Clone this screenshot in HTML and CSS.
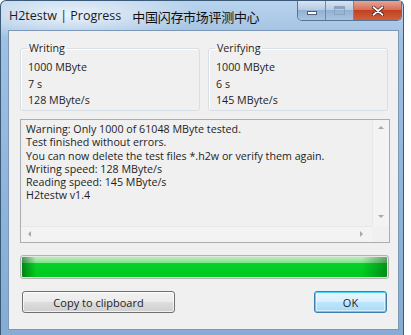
FILE: index.html
```html
<!DOCTYPE html>
<html lang="en">
<head>
  <meta charset="UTF-8" />
  <title>H2testw | Progress</title>
  <link rel="stylesheet" href="styles.css">
</head>
<body>
  <div class="window">
    <div class="titlebar">
      <span class="title">H2testw | Progress</span>
      <span class="title-cn">中国闪存市场评测中心</span>
      <div class="caption-buttons">
        <div class="cap cap-min"><span class="min-glyph"></span></div>
        <div class="cap cap-max"><span class="max-glyph"></span></div>
        <div class="cap cap-close">
          <svg width="12" height="10" viewBox="0 0 12 10">
            <path d="M1 1 L11 9 M11 1 L1 9" stroke="#3a1010" stroke-width="3.2" stroke-linecap="round"/>
            <path d="M1.5 1.2 L10.5 8.8 M10.5 1.2 L1.5 8.8" stroke="#fff" stroke-width="1.8" stroke-linecap="round"/>
          </svg>
        </div>
      </div>
    </div>

    <div class="client">
      <div class="groups">
        <fieldset class="group">
          <legend>Writing</legend>
          <div class="stat">1000 MByte</div>
          <div class="stat">7 s</div>
          <div class="stat">128 MByte/s</div>
        </fieldset>
        <fieldset class="group">
          <legend>Verifying</legend>
          <div class="stat">1000 MByte</div>
          <div class="stat">6 s</div>
          <div class="stat">145 MByte/s</div>
        </fieldset>
      </div>

      <div class="log">
        <div class="log-main">
          <div class="log-text">
            <div>Warning: Only 1000 of 61048 MByte tested.</div>
            <div>Test finished without errors.</div>
            <div>You can now delete the test files *.h2w or verify them again.</div>
            <div>Writing speed: 128 MByte/s</div>
            <div>Reading speed: 145 MByte/s</div>
            <div>H2testw v1.4</div>
          </div>
          <div class="vscroll">
            <span class="arrow arrow-up"></span>
            <span class="arrow arrow-down"></span>
          </div>
        </div>
        <div class="hscroll-row">
          <div class="hscroll">
            <span class="arrow arrow-left"></span>
            <span class="arrow arrow-right"></span>
          </div>
          <div class="corner"></div>
        </div>
      </div>

      <div class="progress">
        <div class="progress-fill"></div>
      </div>

      <div class="buttons">
        <button class="btn btn-copy">Copy to clipboard</button>
        <button class="btn btn-ok">OK</button>
      </div>
    </div>
  </div>
</body>
</html>
```

FILE: styles.css
```css
* {
  box-sizing: border-box;
}

body {
  margin: 0;
  width: 411px;
  height: 335px;
  background: #ffffff;
  font-family: 'Open Sans', 'Noto Sans', sans-serif;
  font-size: 10.7px;
  color: #1e1e1e;
  overflow: hidden;
}

.window {
  width: 404px;
  height: 335px;
  display: flex;
  flex-direction: column;
  padding: 0 4px 5px 7px;
  border: 1px solid #3b5a7a;
  border-bottom: none;
  border-radius: 6px 6px 0 0;
  background:
    radial-gradient(ellipse 130px 26px at 70px 14px, rgba(255, 255, 255, 0.75), rgba(255, 255, 255, 0) 100%),
    linear-gradient(180deg, #b9d3ec 0%, #9fc0e2 12%, #8fb4da 60%, #86acd3 100%);
}

/* title bar */

.titlebar {
  height: 29px;
  display: flex;
  align-items: flex-start;
  position: relative;
}

.title {
  font-size: 12.5px;
  color: #1a1a1a;
  margin-top: 6px;
  margin-left: 1px;
}

.title-cn {
  font-family: 'Noto Sans CJK SC', sans-serif;
  font-size: 13px;
  color: #101010;
  margin-top: 6px;
  margin-left: 11px;
  letter-spacing: -0.3px;
}

.caption-buttons {
  margin-left: auto;
  margin-right: -3px;
  display: flex;
  height: 20px;
  border: 1px solid #5a7391;
  border-top: none;
  border-radius: 0 0 5px 5px;
  overflow: hidden;
}

.cap {
  height: 19px;
  display: flex;
  align-items: center;
  justify-content: center;
}

.cap-min,
.cap-max {
  width: 28px;
  background: linear-gradient(180deg, #d6e4f2 0%, #b7cde4 45%, #92b1d3 50%, #a9c4e1 100%);
  border-right: 1px solid #6e89a8;
}

.min-glyph {
  width: 10px;
  height: 4px;
  margin-top: 5px;
  background: #ffffff;
  border: 1px solid #4c5f76;
}

.max-glyph {
  width: 11px;
  height: 9px;
  border: 1px solid #8aa3bf;
  border-top-width: 3px;
}

.cap-close {
  width: 47px;
  background: linear-gradient(180deg, #e8a493 0%, #d7705a 45%, #c1411f 50%, #d0603c 100%);
}

/* client area */

.client {
  flex: 1;
  background: #f0f0f0;
  border: 1px solid #7d98b6;
  padding: 10px 10px 10px 11px;
  display: flex;
  flex-direction: column;
}

.groups {
  display: flex;
  gap: 8px;
}

.group {
  width: 181px;
  height: 70px;
  margin: 0;
  padding: 4px 7px 0 7px;
  border: 1px solid #d5dfe5;
  border-radius: 3px;
  box-shadow: inset 1px 1px 0 #ffffff;
}

.group legend {
  padding: 0 2px;
  margin-left: -1px;
  font-size: 10.7px;
  color: #1e1e1e;
}

.stat {
  height: 16.5px;
  line-height: 16.5px;
}

.log {
  margin-top: 8px;
  width: 370px;
  height: 124px;
  border: 1px solid #abadb3;
  background: #f0f0f0;
  display: flex;
  flex-direction: column;
}

.log-main {
  flex: 1;
  display: flex;
}

.log-text {
  flex: 1;
  padding: 3px 0 0 5px;
  line-height: 13.3px;
  white-space: nowrap;
  overflow: hidden;
}

.vscroll {
  width: 17px;
  border-left: 1px solid #e8e8e8;
  background: #f3f3f3;
  position: relative;
}

.hscroll-row {
  height: 16px;
  display: flex;
}

.hscroll {
  flex: 1;
  background: #f3f3f3;
  border-top: 1px solid #e8e8e8;
  position: relative;
}

.corner {
  width: 17px;
  background: #f0f0f0;
}

.arrow {
  position: absolute;
  width: 0;
  height: 0;
  border: 3px solid transparent;
}

.arrow-up {
  top: 6px;
  left: 5px;
  border-bottom: 3px solid #a7a7a7;
  border-top: none;
}

.arrow-down {
  bottom: 8px;
  left: 5px;
  border-top: 3px solid #a7a7a7;
  border-bottom: none;
}

.arrow-left {
  left: 7px;
  top: 4px;
  border-right: 3px solid #a7a7a7;
  border-left: none;
}

.arrow-right {
  right: 9px;
  top: 4px;
  border-left: 3px solid #a7a7a7;
  border-right: none;
}

.progress {
  margin-top: 12px;
  width: 369px;
  height: 24px;
  border: 1px solid #b2b2b2;
  border-radius: 3px;
  background: #e6e6e6;
  padding: 1px;
}

.progress-fill {
  width: 100%;
  height: 100%;
  border-radius: 1px;
  background:
    linear-gradient(90deg, rgba(0, 70, 10, 0.55) 0px, rgba(0, 70, 10, 0) 14px, rgba(0, 70, 10, 0) 340px, rgba(0, 70, 10, 0.45) 365px),
    linear-gradient(180deg, #b8f0b8 0%, #7ee38a 30%, #06d22a 32%, #00cc22 70%, #02c81f 100%);
}

.buttons {
  margin-top: 12px;
  display: flex;
  justify-content: space-between;
  padding: 0 1px 0 2px;
}

.btn {
  height: 22px;
  font-family: inherit;
  font-size: 11px;
  color: #1e1e1e;
  border: 1px solid #707070;
  border-radius: 3px;
  background: linear-gradient(180deg, #f2f2f2 0%, #ebebeb 48%, #dddddd 52%, #cfcfcf 100%);
  box-shadow: inset 0 0 0 1px rgba(255, 255, 255, 0.7);
  padding: 0;
}

.btn-copy {
  width: 153px;
}

.btn-ok {
  width: 73px;
  border-color: #3c7fb1;
  box-shadow: inset 0 0 0 1px #48d8fb, inset 0 0 0 2px rgba(255, 255, 255, 0.5);
  background: linear-gradient(180deg, #eaf6fd 0%, #d9f0fc 48%, #bee6fd 52%, #a7d9f5 100%);
}
```
